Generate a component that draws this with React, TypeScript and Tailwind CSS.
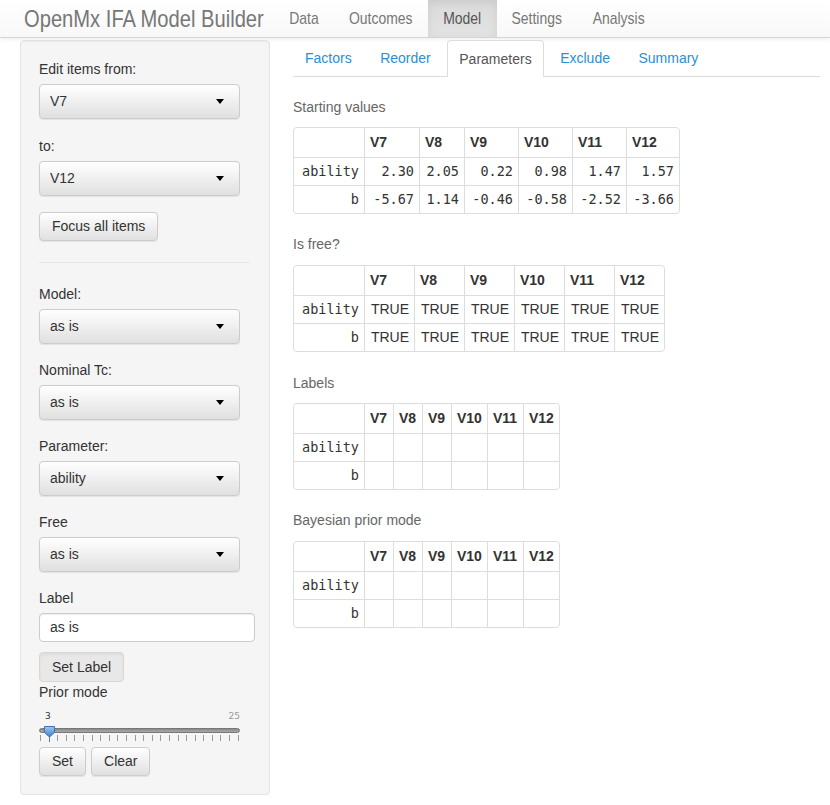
import React from "react";

const navLinks = [
  { name: "Data", w: "w-[59px]", active: false },
  { name: "Outcomes", w: "w-[95px]", active: false },
  { name: "Model", w: "w-[69px]", active: true },
  { name: "Settings", w: "w-[80px]", active: false },
  { name: "Analysis", w: "w-[83px]", active: false },
];

const tabs = ["Factors", "Reorder", "Parameters", "Exclude", "Summary"];
const cols = ["V7", "V8", "V9", "V10", "V11", "V12"];

function Caret() {
  return <span className="h-0 w-0 border-x-[4px] border-t-[5px] border-x-transparent border-t-black" />;
}

function Select({ value }: { value: string }) {
  return (
    <div className="flex h-[35px] w-[201px] items-center justify-between rounded border border-[#ccc] bg-linear-to-b from-white to-[#e0e0e0] pl-[10px] pr-[15px] text-[14px] text-[#333] shadow-[0_1px_1px_rgba(0,0,0,0.075)]">
      <span>{value}</span>
      <Caret />
    </div>
  );
}

function Btn({ label, pressed }: { label: string; pressed?: boolean }) {
  return (
    <div
      className={
        pressed
          ? "flex h-[30px] items-center rounded border border-[#ddd6cf] bg-[#e8e8e8] px-[12px] text-[14px] text-[#333] shadow-[inset_0_2px_3px_rgba(0,0,0,0.05)]"
          : "flex h-[29px] items-center rounded border border-[#ccc] bg-linear-to-b from-white to-[#e0e0e0] px-[12px] text-[14px] text-[#333] shadow-[0_1px_1px_rgba(0,0,0,0.075)]"
      }
    >
      {label}
    </div>
  );
}

function Field({ label, value }: { label: string; value: string }) {
  return (
    <div className="flex flex-col">
      <div className="h-5 leading-5">{label}</div>
      <div className="mt-[5px]">
        <Select value={value} />
      </div>
    </div>
  );
}

type Cell = { t: string; mono?: boolean };

function DataTable({
  grid,
  rows,
}: {
  grid: string;
  rows: { label: string; cells: Cell[] }[];
}) {
  return (
    <div className={"grid w-fit gap-px overflow-hidden rounded border border-[#ddd] bg-[#ddd] " + grid}>
      <div className="h-[29px] bg-white" />
      {cols.map((c) => (
        <div key={c} className="flex h-[29px] items-center bg-white px-[5px] font-bold text-[#333]">
          {c}
        </div>
      ))}
      {rows.map((r) => (
        <React.Fragment key={r.label}>
          <div className="flex h-[27px] items-center justify-end bg-white pr-[5px] font-['DejaVu_Sans_Mono',monospace] text-[13.5px] text-[#333]">
            {r.label}
          </div>
          {r.cells.map((c, i) => (
            <div
              key={i}
              className={
                c.mono
                  ? "flex h-[27px] items-center justify-end bg-white pr-[5px] font-['DejaVu_Sans_Mono',monospace] text-[13.5px] text-[#333]"
                  : "flex h-[27px] items-center justify-end bg-white pr-[5px] text-[14px] text-[#333]"
              }
            >
              {c.t}
            </div>
          ))}
        </React.Fragment>
      ))}
    </div>
  );
}

function Slider() {
  const ticks = Array.from({ length: 24 }, (_, i) => i);
  return (
    <div className="mt-[8px] w-[201px]">
      <div className="flex h-[12px] items-center justify-between font-['DejaVu_Sans',sans-serif] text-[9px] leading-[12px]">
        <span className="pl-[6px] text-[#333]">3</span>
        <span className="text-[#999]">25</span>
      </div>
      <div className="relative mt-[6px] h-[5px] rounded-full border border-[#777] bg-linear-to-b from-[#888] to-[#aaa]">
        <svg className="absolute left-[3px] top-[-4px]" width="13" height="13" viewBox="0 0 13 13">
          <defs>
            <linearGradient id="hg" x1="0" y1="0" x2="0" y2="1">
              <stop offset="0" stopColor="#9cc6f0" />
              <stop offset="1" stopColor="#3f83cf" />
            </linearGradient>
          </defs>
          <path d="M1.5 1.5 H11.5 V7.5 L6.5 12 L1.5 7.5 Z" fill="url(#hg)" stroke="#3b73b4" strokeWidth="1" strokeLinejoin="round" />
        </svg>
      </div>
      <div className="mt-[2px] flex h-[7px] justify-between px-px">
        {ticks.map((t) => (
          <span key={t} className={t === 1 ? "h-[7px] w-px bg-[#777]" : "h-[6px] w-px bg-[#999]"} />
        ))}
      </div>
    </div>
  );
}

export default function App() {
  const mono = (t: string): Cell => ({ t, mono: true });
  const sans = (t: string): Cell => ({ t });
  const empty = cols.map(() => sans(""));
  const trues = cols.map(() => sans("TRUE"));

  return (
    <div className="min-h-[805px] w-[830px] bg-white font-['Liberation_Sans',Arial,sans-serif] text-[14px] text-[#333]">
      {/* navbar */}
      <div className="flex h-[38px] items-stretch border-b border-[#d4d4d4] bg-linear-to-b from-white to-[#f8f8f8] shadow-[0_1px_5px_rgba(0,0,0,0.08)]">
        <div className="flex w-[274px] items-center pl-[24px] text-[#777]">
          <span className="origin-left scale-x-[0.84] whitespace-nowrap text-[24px]">OpenMx IFA Model Builder</span>
        </div>
        {navLinks.map((l) => (
          <div
            key={l.name}
            className={
              l.active
                ? "flex items-center justify-center bg-linear-to-b from-[#dbdbdb] to-[#e2e2e2] text-[#555] shadow-[inset_0_3px_9px_rgba(0,0,0,0.075)] " + l.w
                : "flex items-center justify-center text-[#777] " + l.w
            }
          >
            <span className="scale-x-[0.82] whitespace-nowrap text-[17px]">{l.name}</span>
          </div>
        ))}
      </div>

      <div className="flex items-start pt-[2px]">
        {/* sidebar */}
        <div className="ml-[20px] flex h-[755px] w-[250px] flex-col rounded border border-[#e3e3e3] bg-[#f5f5f5] p-[18px] shadow-[inset_0_1px_1px_rgba(0,0,0,0.05)]">
          <Field label="Edit items from:" value="V7" />
          <div className="mt-[17px]">
            <Field label="to:" value="V12" />
          </div>
          <div className="mt-[16px] flex">
            <Btn label="Focus all items" />
          </div>
          <div className="mt-[21px] h-px w-[211px] bg-[#e5e5e5]" />
          <div className="mt-[21px] flex flex-col gap-[16px]">
            <Field label="Model:" value="as is" />
            <Field label="Nominal Tc:" value="as is" />
            <Field label="Parameter:" value="ability" />
            <Field label="Free" value="as is" />
          </div>
          <div className="mt-[16px] h-5 leading-5">Label</div>
          <div className="mt-[5px] flex h-[30px] w-[216px] items-center rounded border border-[#ccc] bg-white pl-[10px] shadow-[inset_0_1px_1px_rgba(0,0,0,0.075)]">
            as is
          </div>
          <div className="mt-[10px] flex">
            <Btn label="Set Label" pressed />
          </div>
          <div className="h-5 leading-5">Prior mode</div>
          <Slider />
          <div className="mt-[5px] flex gap-[5px]">
            <Btn label="Set" />
            <Btn label="Clear" />
          </div>
        </div>

        {/* main */}
        <div className="ml-[23px] flex w-[527px] flex-col">
          <div className="flex h-[37px] items-end border-b border-[#ddd]">
            {tabs.map((t) =>
              t === "Parameters" ? (
                <div
                  key={t}
                  className="-mb-px mr-[4.5px] flex h-[37px] items-center rounded-t border border-b-0 border-[#ddd] bg-white px-[11px] text-[#555]"
                >
                  {t}
                </div>
              ) : (
                <div key={t} className="mr-[4.5px] flex h-[36px] items-center px-[12px] text-[#2a8fd9]">
                  {t}
                </div>
              )
            )}
          </div>

          <div className="mt-[20px] h-5 leading-5 text-[#666]">Starting values</div>
          <div className="mt-[10px]">
            <DataTable
              grid="grid-cols-[70px_54px_44px_53px_53px_53px_52px]"
              rows={[
                { label: "ability", cells: ["2.30", "2.05", "0.22", "0.98", "1.47", "1.57"].map(mono) },
                { label: "b", cells: ["-5.67", "1.14", "-0.46", "-0.58", "-2.52", "-3.66"].map(mono) },
              ]}
            />
          </div>

          <div className="mt-[20px] h-5 leading-5 text-[#666]">Is free?</div>
          <div className="mt-[11px]">
            <DataTable
              grid="grid-cols-[70px_49px_49px_49px_49px_49px_49px]"
              rows={[
                { label: "ability", cells: trues },
                { label: "b", cells: trues },
              ]}
            />
          </div>

          <div className="mt-[21px] h-5 leading-5 text-[#666]">Labels</div>
          <div className="mt-[10px]">
            <DataTable
              grid="grid-cols-[70px_28px_28px_28px_35px_35px_35px]"
              rows={[
                { label: "ability", cells: empty },
                { label: "b", cells: empty },
              ]}
            />
          </div>

          <div className="mt-[20px] h-5 leading-5 text-[#666]">Bayesian prior mode</div>
          <div className="mt-[11px]">
            <DataTable
              grid="grid-cols-[70px_28px_28px_28px_35px_35px_35px]"
              rows={[
                { label: "ability", cells: empty },
                { label: "b", cells: empty },
              ]}
            />
          </div>
        </div>
      </div>
    </div>
  );
}
